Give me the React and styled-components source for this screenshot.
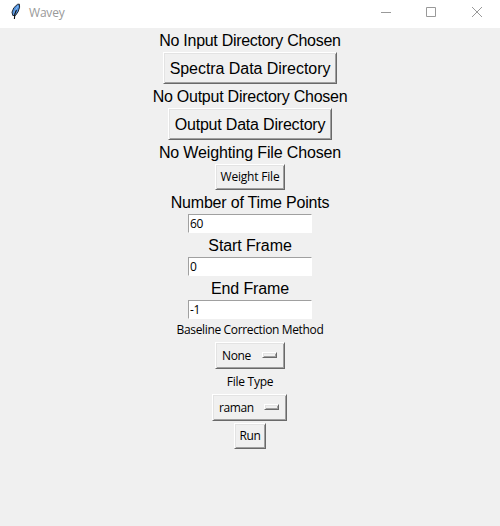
import React from "react";
import styled, { createGlobalStyle } from "styled-components";

const GlobalStyle = createGlobalStyle`
  * { box-sizing: border-box; }
  body { margin: 0; background: #f0f0f0; overflow: hidden; }
`;

const Window = styled.div`
  width: 500px;
  height: 526px;
  display: flex;
  flex-direction: column;
  background: #f0f0f0;
  color: #000;
  font-family: "Open Sans", "Noto Sans", sans-serif;
  font-size: 12px;
`;

const TitleBar = styled.header`
  height: 28px;
  flex: none;
  display: flex;
  align-items: center;
  background: #fff;
  padding-left: 10px;
`;

const Title = styled.h1`
  flex: 1;
  margin: 0 0 2px 7px;
  font-size: 12px;
  line-height: 16px;
  font-weight: 400;
  letter-spacing: -0.2px;
  color: #999;
`;

const Feather = styled.svg`
  width: 12px;
  height: 18px;
  margin-bottom: 4px;
`;

const WindowButton = styled.button`
  width: 46px;
  height: 28px;
  padding: 0 0 4px;
  border: 0;
  background: transparent;
  display: flex;
  align-items: center;
  justify-content: center;
  svg { width: 10px; height: 10px; fill: none; stroke: #999; overflow: visible; }
`;

const Form = styled.main`
  display: flex;
  flex-direction: column;
  align-items: center;
`;

const Label = styled.label`
  height: 24px;
  line-height: 25px;
  font-family: "Liberation Sans", Arial, sans-serif;
  font-size: 16px;
  letter-spacing: ${(p) => p.$track || 0}px;
  white-space: nowrap;
`;

const SmallLabel = styled.label`
  height: 21px;
  line-height: 21px;
  letter-spacing: ${(p) => p.$track || 0}px;
  white-space: nowrap;
`;

const RaisedButton = styled.button`
  width: ${(p) => p.$width}px;
  height: ${(p) => (p.$large ? 32 : 26)}px;
  padding: ${(p) => (p.$large ? "2px 0 0" : "0 0 1px")};
  display: flex;
  align-items: center;
  justify-content: center;
  border: 1px solid;
  border-color: #fff #696969 #696969 #fff;
  box-shadow: inset 1px 1px #e3e3e3, inset -1px -1px #a0a0a0;
  background: #f0f0f0;
  color: #000;
  font-family: ${(p) => (p.$large ? '"Liberation Sans", Arial, sans-serif' : "inherit")};
  font-size: ${(p) => (p.$large ? "16px" : "inherit")};
  letter-spacing: ${(p) => p.$track || 0}px;
  white-space: nowrap;
`;

const Entry = styled.input`
  width: 124px;
  height: 19px;
  padding: 0 0 0 1px;
  border: 1px solid;
  border-color: #a0a0a0 #fff #fff #a0a0a0;
  border-radius: 0;
  outline: 0;
  background: #fff;
  color: #000;
  font: inherit;
  letter-spacing: -0.3px;
`;

const OptionMenu = styled(RaisedButton)`
  height: 27px;
  margin: 2px 0;
  padding: 0 7px 0 6px;
  justify-content: space-between;
`;

const FileTypeMenu = styled(OptionMenu)`
  margin-right: 1px;
`;

const Indicator = styled.span`
  width: 15px;
  height: 6px;
  margin-bottom: 1px;
  border: 1px solid;
  border-color: #fff #696969 #696969 #fff;
  box-shadow: inset 1px 1px #e3e3e3, inset -1px -1px #a0a0a0;
`;

export default function App() {
  return (
    <Window>
      <GlobalStyle />
      <TitleBar>
        <Feather viewBox="0 0 12 18" aria-hidden="true">
          <path d="M2.8 12.5 2 9.2l1.8-4.4L7.4 1.4l1.9-.3.3 3.1-1.4 4.4-2.8 4Z" fill="#4f91df" stroke="#202832" />
          <path d="M8 3 5.6 6.8 4 11.4" fill="none" stroke="#8fc0f8" />
          <path d="M6.4 7 4.8 11 4.4 16" fill="none" stroke="#111" strokeWidth="1.1" />
        </Feather>
        <Title>Wavey</Title>
        <WindowButton aria-label="Minimize">
          <svg viewBox="0 0 10 10"><path d="M1 5.5h10" /></svg>
        </WindowButton>
        <WindowButton aria-label="Maximize">
          <svg viewBox="0 0 10 10"><path d="M.5.5h9v9h-9Z" /></svg>
        </WindowButton>
        <WindowButton aria-label="Close">
          <svg viewBox="0 0 10 10"><path d="m0 0 10 10M10 0 0 10" /></svg>
        </WindowButton>
      </TitleBar>
      <Form>
        <Label $track={-0.29}>No Input Directory Chosen</Label>
        <RaisedButton $large $width={174} $track={-0.05}>Spectra Data Directory</RaisedButton>
        <Label $track={-0.24}>No Output Directory Chosen</Label>
        <RaisedButton $large $width={164} $track={-0.2}>Output Data Directory</RaisedButton>
        <Label $track={-0.14}>No Weighting File Chosen</Label>
        <RaisedButton $width={70} $track={-0.2}>Weight File</RaisedButton>
        <Label htmlFor="points" $track={-0.2}>Number of Time Points</Label>
        <Entry id="points" defaultValue="60" />
        <Label htmlFor="start" $track={-0.1}>Start Frame</Label>
        <Entry id="start" defaultValue="0" />
        <Label htmlFor="end" $track={-0.12}>End Frame</Label>
        <Entry id="end" defaultValue="-1" />
        <SmallLabel $track={-0.35}>Baseline Correction Method</SmallLabel>
        <OptionMenu $width={70} $track={-0.35}>None<Indicator /></OptionMenu>
        <SmallLabel $track={-0.25}>File Type</SmallLabel>
        <FileTypeMenu $width={75} $track={-0.4}>raman<Indicator /></FileTypeMenu>
        <RaisedButton $width={32} $track={-0.3}>Run</RaisedButton>
      </Form>
    </Window>
  );
}
